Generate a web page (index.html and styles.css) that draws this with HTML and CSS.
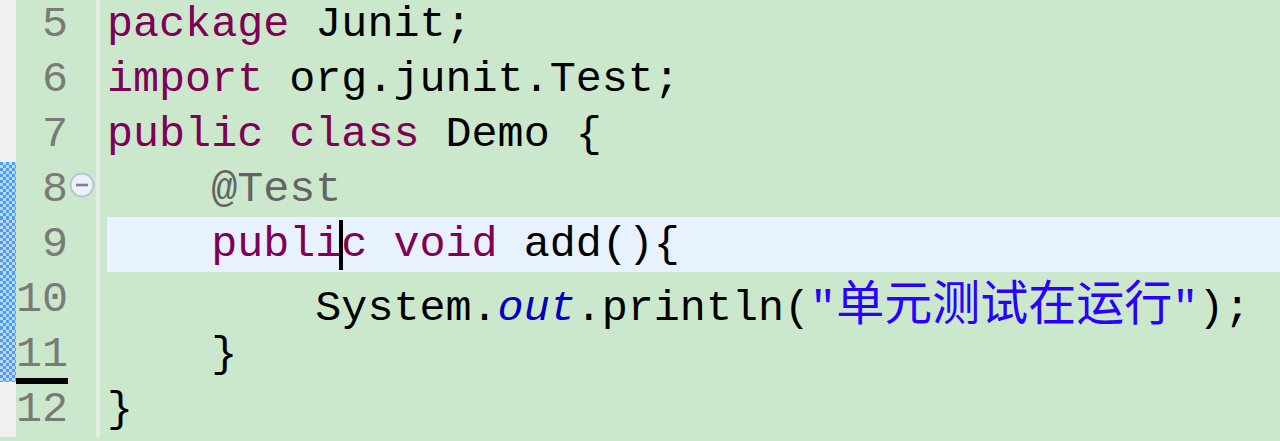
FILE: index.html
```html
<!DOCTYPE html>
<html lang="zh">
<head>
<meta charset="utf-8">
<title>Demo.java</title>
<link rel="stylesheet" href="styles.css">
</head>
<body>
<div class="editor">
  <div class="row"><div class="ruler"></div><div class="ln">5</div><div class="fold"></div><div class="sep"></div><div class="code"><span class="kw">package</span> Junit;</div></div>
  <div class="row"><div class="ruler"></div><div class="ln">6</div><div class="fold"></div><div class="sep"></div><div class="code"><span class="kw">import</span> org.junit.Test;</div></div>
  <div class="row"><div class="ruler"></div><div class="ln">7</div><div class="fold"></div><div class="sep"></div><div class="code"><span class="kw">public</span> <span class="kw">class</span> Demo {</div></div>
  <div class="row"><div class="ruler mark"></div><div class="ln">8</div><div class="fold"><svg class="fold-icon" width="26" height="26" viewBox="0 0 26 26"><circle cx="13" cy="13" r="11.5" fill="#eef2f8" stroke="#b9c4d6" stroke-width="2"/><line x1="7" y1="13" x2="19" y2="13" stroke="#76839a" stroke-width="2.6"/></svg></div><div class="sep"></div><div class="code">    <span class="ann">@Test</span></div></div>
  <div class="row"><div class="ruler mark"></div><div class="ln">9</div><div class="fold"></div><div class="sep"></div><div class="code current">    <span class="kw">publi<span class="caret"></span>c</span> <span class="kw">void</span> add(){</div></div>
  <div class="row"><div class="ruler mark"></div><div class="ln">10</div><div class="fold"></div><div class="sep"></div><div class="code">        System.<span class="field">out</span>.println(<span class="str">"<span class="cjk">单元测试在运行</span>"</span>);</div></div>
  <div class="row"><div class="ruler mark"></div><div class="ln under">11</div><div class="fold"></div><div class="sep"></div><div class="code">    }</div></div>
  <div class="row"><div class="ruler"></div><div class="ln">12</div><div class="fold"></div><div class="sep"></div><div class="code">}</div></div>
</div>
</body>
</html>
```
FILE: styles.css
```css
html, body {
  margin: 0;
  padding: 0;
  height: 441px;
  overflow: hidden;
  background: #cbe8cd;
}

.editor {
  margin-top: -3px;
  font-family: "Liberation Mono", "Courier New", "Noto Sans CJK SC", monospace;
  font-size: 43.4px;
  line-height: 55px;
  color: #000;
}

.row {
  display: flex;
  height: 55px;
}

.ruler {
  width: 16px;
  flex: none;
  background: #f0f0f0;
}

.ruler.mark {
  background-color: #4f9df3;
  background-image: conic-gradient(#b9d9fb 25%, transparent 0 50%, #b9d9fb 0 75%, transparent 0);
  background-size: 6px 6px;
}

.ln {
  width: 52px;
  flex: none;
  text-align: right;
  color: #7a7a7a;
  position: relative;
}

.ln.under::after {
  content: "";
  position: absolute;
  left: 0;
  right: 0;
  top: 51px;
  height: 6px;
  background: #000;
}

.fold {
  width: 28px;
  flex: none;
  display: flex;
  align-items: flex-start;
  padding-top: 10px;
  box-sizing: border-box;
}

.fold-icon {
  display: block;
  margin-left: 1px;
}

.sep {
  width: 4px;
  flex: none;
  background: #e5ede5;
}

.code {
  flex: 1;
  margin-left: 7px;
  white-space: pre;
}

.code.current {
  background: #e8f2fe;
}

.kw {
  color: #7f0055;
}

.ann {
  color: #646464;
}

.field {
  color: #0000c0;
  font-style: italic;
}

.str {
  color: #2a00ff;
}

.cjk {
  font-family: "Noto Sans CJK SC", sans-serif;
  font-size: 48px;
}

.caret {
  position: relative;
}

.caret::after {
  content: "";
  position: absolute;
  left: -2px;
  top: 0;
  width: 4px;
  height: 50px;
  background: #000;
}
```
